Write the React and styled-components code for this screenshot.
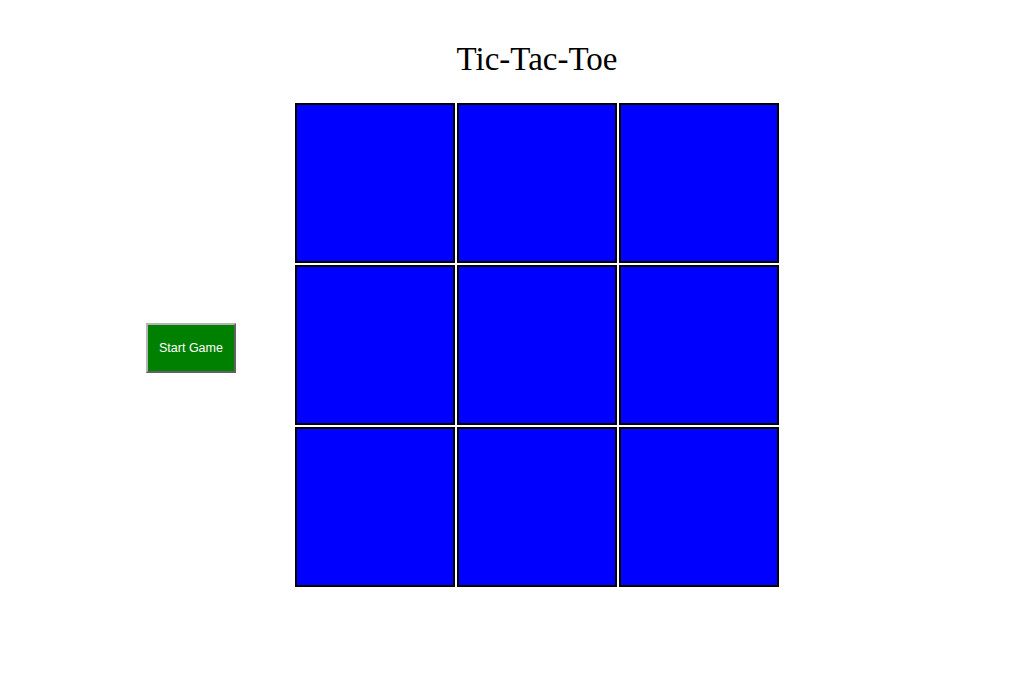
import styled, { createGlobalStyle } from "styled-components";

const GlobalStyle = createGlobalStyle`
  html, body {
    margin: 0;
    padding: 0;
    background: #fff;
  }
  body {
    font-family: "Liberation Serif", "Times New Roman", serif;
  }
`;

const Page = styled.div`
  display: flex;
  align-items: flex-start;
  padding: 40px 0 0 146px;
  width: 1009px;
  height: 694px;
  box-sizing: border-box;
`;

const Side = styled.div`
  display: flex;
  flex-direction: column;
  padding-top: 283px;
`;

const StartButton = styled.button`
  width: 90px;
  height: 50px;
  background: #008000;
  color: #fff;
  border: 2px outset #b5b5b5;
  font-family: "Liberation Sans", Arial, sans-serif;
  font-size: 12.5px;
  padding: 0;
  cursor: pointer;
`;

const Column = styled.div`
  display: flex;
  flex-direction: column;
  align-items: center;
  margin-left: 59px;
  width: 484px;
`;

const Title = styled.h1`
  margin: 0;
  font-family: "Liberation Serif", "Times New Roman", serif;
  font-weight: normal;
  font-size: 33px;
  line-height: 37px;
  height: 37px;
  padding-top: 1px;
`;

const Board = styled.div`
  display: grid;
  grid-template-columns: repeat(3, 160px);
  grid-template-rows: repeat(3, 160px);
  gap: 2px;
  margin-top: 25px;
`;

const Cell = styled.div`
  box-sizing: border-box;
  background: #0000ff;
  border: 2px solid #000;
`;

export default function App() {
  return (
    <>
      <GlobalStyle />
      <Page>
        <Side>
          <StartButton type="button">Start Game</StartButton>
        </Side>
        <Column>
          <Title>Tic-Tac-Toe</Title>
          <Board>
            {Array.from({ length: 9 }, (_, i) => (
              <Cell key={i} />
            ))}
          </Board>
        </Column>
      </Page>
    </>
  );
}
